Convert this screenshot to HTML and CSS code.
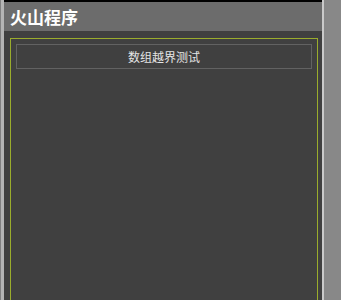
FILE: index.html
```html
<!DOCTYPE html>
<html lang="zh">
<head>
<meta charset="utf-8">
<link rel="stylesheet" href="styles.css">
</head>
<body>
<div class="window">
  <div class="edge-left"><span class="edge-a"></span><span class="edge-b"></span></div>
  <div class="panel">
    <div class="header">火山程序</div>
    <div class="content">
      <div class="group">
        <div class="button">数组越界测试</div>
      </div>
    </div>
  </div>
  <div class="edge-right"><span class="edge-c"></span><span class="edge-d"></span></div>
</div>
</body>
</html>
```
FILE: styles.css
```css
html, body {
  margin: 0;
  padding: 0;
  height: 100%;
  overflow: hidden;
  background: #404040;
}
.window {
  display: flex;
  height: 300px;
  width: 341px;
}
.edge-left, .edge-right {
  display: flex;
}
.edge-a { width: 1px; background: #808080; }
.edge-b { width: 3px; background: #b4b4b4; }
.edge-c { width: 2px; background: #cacaca; }
.edge-d { width: 17px; background: #888888; }
.panel {
  flex: 1;
  display: flex;
  flex-direction: column;
  border-top: 2px solid #000;
  background: #404040;
}
.header {
  height: 29px;
  background: #6c6c6c;
  color: #ffffff;
  font-family: "Noto Sans CJK SC", sans-serif;
  font-weight: 700;
  font-size: 17px;
  line-height: 29px;
  padding-left: 6px;
}
.content {
  flex: 1;
  padding: 7px 4px 0 6px;
  display: flex;
}
.group {
  flex: 1;
  border: 1px solid #9aac2c;
  border-bottom: none;
  padding: 5px 5px 0 5px;
}
.button {
  height: 23px;
  border: 1px solid #626262;
  color: #e4e4e4;
  font-family: "Noto Sans CJK SC", sans-serif;
  font-size: 12px;
  line-height: 23px;
  text-align: center;
}
```
